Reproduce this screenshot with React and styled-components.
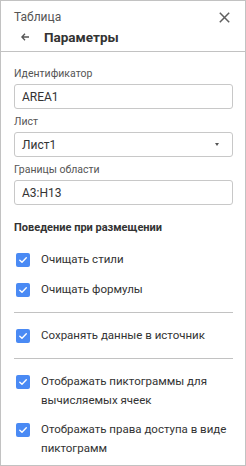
import React from "react";
import styled, { createGlobalStyle } from "styled-components";

const Global = createGlobalStyle`
  html, body { margin: 0; padding: 0; background: #fff; }
  body { font-family: Roboto, "Noto Sans", Arial, sans-serif; }
  * { box-sizing: border-box; }
`;

const Panel = styled.div`
  width: 246px;
  height: 466px;
  border: 1px solid #c2c2c2;
  background: #fff;
  display: flex;
  flex-direction: column;
  overflow: hidden;
`;

const Header = styled.div`
  flex: none;
  height: 51px;
  border-bottom: 1px solid #c2c2c2;
  padding: 9px 12px 0 13px;
  display: flex;
  flex-direction: column;
`;

const TopLine = styled.div`
  display: flex;
  align-items: center;
  justify-content: space-between;
  height: 14px;
`;

const Crumb = styled.span`
  font-size: 12px;
  color: #555;
  line-height: 14px;
`;

const CloseBtn = styled.button`
  border: 0;
  background: none;
  padding: 0;
  margin-right: 3px;
  width: 11px;
  height: 11px;
  display: flex;
  cursor: pointer;
`;

const TitleRow = styled.div`
  display: flex;
  align-items: center;
  height: 20px;
  margin-top: 3px;
`;

const BackBtn = styled.button`
  border: 0;
  background: none;
  padding: 0;
  margin-left: 7px;
  width: 8px;
  height: 8px;
  display: flex;
  cursor: pointer;
`;

const Title = styled.h1`
  margin: 0 0 0 15px;
  font-size: 13.5px;
  font-weight: 700;
  color: #333;
  line-height: 20px;
`;

const Body = styled.div`
  flex: none;
  padding: 15px 12px 0 13px;
  display: flex;
  flex-direction: column;
`;

const Field = styled.div`
  display: flex;
  flex-direction: column;
  margin-bottom: 6px;
`;

const Label = styled.label`
  font-size: 10.5px;
  color: #555;
  line-height: 14px;
  margin-bottom: 3px;
`;

const Box = styled.div`
  flex: none;
  height: 25px;
  border: 1px solid #c8c8c8;
  border-radius: 3px;
  padding: 0 7px;
  display: flex;
  align-items: center;
  justify-content: space-between;
  font-size: 12px;
  color: #333;
`;

const Caret = styled.span`
  width: 0;
  height: 0;
  border-left: 2.5px solid transparent;
  border-right: 2.5px solid transparent;
  border-top: 3px solid #555;
  margin-right: 6px;
`;

const SectionTitle = styled.div`
  margin-top: 10px;
  font-size: 11px;
  font-weight: 700;
  color: #333;
  line-height: 14px;
  margin-bottom: 2px;
`;

const Group = styled.div`
  flex: none;
  padding: 13px 0;
  display: flex;
  flex-direction: column;
  gap: ${(p) => p.$gap || 11}px;
  border-bottom: ${(p) => (p.$divider ? "1px solid #c2c2c2" : "0")};
`;

const Row = styled.label`
  display: flex;
  align-items: flex-start;
  gap: 11px;
  padding-left: 2px;
  cursor: pointer;
`;

const Check = styled.span`
  flex: none;
  width: 14px;
  height: 14px;
  margin-top: 2.5px;
  border-radius: 2px;
  background: #4a8af4;
  display: flex;
  align-items: center;
  justify-content: center;
`;

const RowText = styled.span`
  font-size: 11.5px;
  line-height: 19px;
  color: #333;
`;

const CheckRow = ({ children }) => (
  <Row>
    <Check>
      <svg width="10" height="10" viewBox="0 0 10 10">
        <path d="M1.8 5.2 L4 7.3 L8.3 2.8" fill="none" stroke="#fff" strokeWidth="1.4" strokeLinecap="round" strokeLinejoin="round" />
      </svg>
    </Check>
    <RowText>{children}</RowText>
  </Row>
);

export default function App() {
  return (
    <>
      <Global />
      <Panel>
        <Header>
          <TopLine>
            <Crumb>Таблица</Crumb>
            <CloseBtn aria-label="Закрыть">
              <svg width="11" height="11" viewBox="0 0 11 11">
                <path d="M0.8 0.8 L10.2 10.2 M10.2 0.8 L0.8 10.2" stroke="#5f5f5f" strokeWidth="1.5" />
              </svg>
            </CloseBtn>
          </TopLine>
          <TitleRow>
            <BackBtn aria-label="Назад">
              <svg width="8" height="8" viewBox="0 0 8 8">
                <path d="M8 4 H1 M4 0.8 L0.9 4 L4 7.2" fill="none" stroke="#555" strokeWidth="1.3" />
              </svg>
            </BackBtn>
            <Title>Параметры</Title>
          </TitleRow>
        </Header>
        <Body>
          <Field>
            <Label>Идентификатор</Label>
            <Box>AREA1</Box>
          </Field>
          <Field>
            <Label>Лист</Label>
            <Box>
              Лист1
              <Caret />
            </Box>
          </Field>
          <Field>
            <Label>Границы области</Label>
            <Box>A3:H13</Box>
          </Field>
          <SectionTitle>Поведение при размещении</SectionTitle>
          <Group $divider>
            <CheckRow>Очищать стили</CheckRow>
            <CheckRow>Очищать формулы</CheckRow>
          </Group>
          <Group $divider>
            <CheckRow>Сохранять данные в источник</CheckRow>
          </Group>
          <Group $gap={10}>
            <CheckRow>Отображать пиктограммы для вычисляемых ячеек</CheckRow>
            <CheckRow>Отображать права доступа в виде пиктограмм</CheckRow>
          </Group>
        </Body>
      </Panel>
    </>
  );
}
